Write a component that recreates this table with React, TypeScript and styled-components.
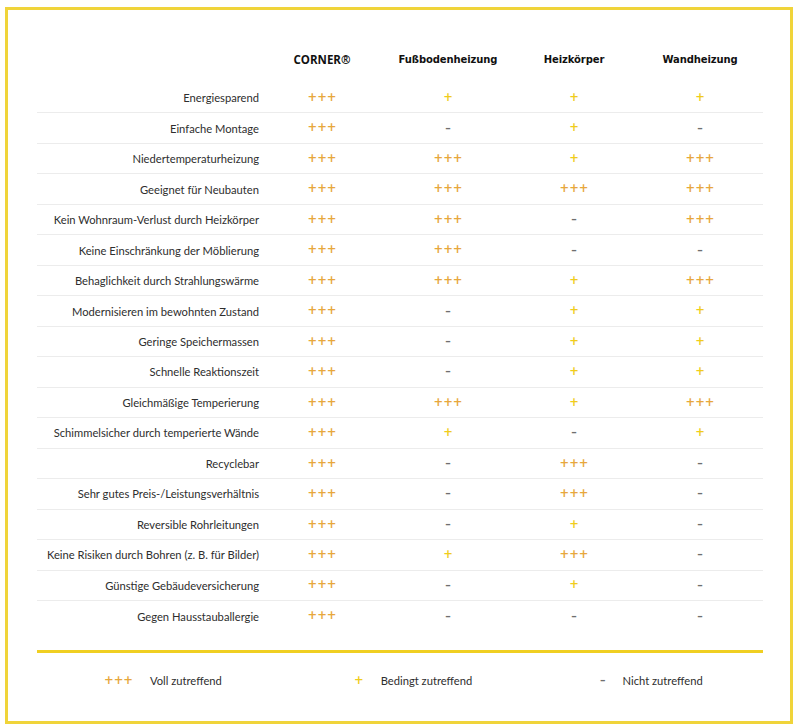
import React from 'react';
import styled, { createGlobalStyle } from 'styled-components';

type Rating = 'full' | 'partial' | 'none';

interface Row {
  label: string;
  values: Rating[];
}

const F: Rating = 'full';
const B: Rating = 'partial';
const N: Rating = 'none';

const columns = ['CORNER®', 'Fußbodenheizung', 'Heizkörper', 'Wandheizung'];

const rows: Row[] = [
  { label: 'Energiesparend', values: [F, B, B, B] },
  { label: 'Einfache Montage', values: [F, N, B, N] },
  { label: 'Niedertemperaturheizung', values: [F, F, B, F] },
  { label: 'Geeignet für Neubauten', values: [F, F, F, F] },
  { label: 'Kein Wohnraum-Verlust durch Heizkörper', values: [F, F, N, F] },
  { label: 'Keine Einschränkung der Möblierung', values: [F, F, N, N] },
  { label: 'Behaglichkeit durch Strahlungswärme', values: [F, F, B, F] },
  { label: 'Modernisieren im bewohnten Zustand', values: [F, N, B, B] },
  { label: 'Geringe Speichermassen', values: [F, N, B, B] },
  { label: 'Schnelle Reaktionszeit', values: [F, N, B, B] },
  { label: 'Gleichmäßige Temperierung', values: [F, F, B, F] },
  { label: 'Schimmelsicher durch temperierte Wände', values: [F, B, N, B] },
  { label: 'Recyclebar', values: [F, N, F, N] },
  { label: 'Sehr gutes Preis-/Leistungsverhältnis', values: [F, N, F, N] },
  { label: 'Reversible Rohrleitungen', values: [F, N, B, N] },
  { label: 'Keine Risiken durch Bohren (z. B. für Bilder)', values: [F, B, F, N] },
  { label: 'Günstige Gebäudeversicherung', values: [F, N, B, N] },
  { label: 'Gegen Hausstauballergie', values: [F, N, N, N] },
];

const GlobalStyle = createGlobalStyle`
  html, body {
    margin: 0;
    padding: 0;
    background: #ffffff;
  }
`;

const Frame = styled.div`
  box-sizing: border-box;
  margin: 7px 0 0 5px;
  width: 788px;
  height: 717px;
  border: 3px solid #f0d43a;
  padding: 39px 27px 0 29px;
  font-family: 'Lato', 'Open Sans', sans-serif;
  color: #333;
`;

const Grid = styled.div`
  display: grid;
  grid-template-columns: 222px repeat(4, 126px);
`;

const HeadRow = styled(Grid)`
  height: 20px;
  margin-bottom: 14px;
  align-items: center;
`;

const HeadCell = styled.div<{ $brand?: boolean }>`
  text-align: center;
  font-weight: bold;
  color: #111;
  font-family: ${p => (p.$brand ? "'Open Sans', sans-serif" : "'DejaVu Sans', sans-serif")};
  font-size: ${p => (p.$brand ? '11.5px' : '10px')};
  letter-spacing: ${p => (p.$brand ? '0' : '-0.1px')};
`;

const BodyRow = styled(Grid)<{ $last?: boolean }>`
  box-sizing: border-box;
  height: 30.47px;
  align-items: center;
  border-bottom: ${p => (p.$last ? 'none' : '1px solid #ececec')};
`;

const Label = styled.div`
  text-align: right;
  font-size: 11.2px;
  color: #2e2e2e;
`;

const Mark = styled.span<{ $kind: Rating }>`
  display: block;
  text-align: center;
  font-family: 'DejaVu Sans', sans-serif;
  font-weight: bold;
  font-size: ${p => (p.$kind === 'none' ? '11px' : '11.5px')};
  line-height: 1;
  color: ${p => (p.$kind === 'full' ? '#e7a73c' : p.$kind === 'partial' ? '#f0cc1c' : '#6f6f6f')};
  letter-spacing: ${p => (p.$kind === 'full' ? '0' : '0')};
`;

const symbolFor = (r: Rating) => (r === 'full' ? '+++' : r === 'partial' ? '+' : '–');

const Rule = styled.div`
  height: 3px;
  background: #f0cf22;
  margin-top: 19px;
  width: 726px;
`;

const Legend = styled.div`
  display: grid;
  grid-template-columns: 250px 246px auto;
  padding-left: 67px;
  margin-top: 21px;
  align-items: center;
`;

const LegendItem = styled.div`
  display: flex;
  align-items: center;
  gap: 17px;
  font-size: 11.2px;
  color: #2e2e2e;
`;

export default function App() {
  return (
    <>
      <GlobalStyle />
      <Frame>
        <HeadRow>
          <div />
          {columns.map((c, i) => (
            <HeadCell key={c} $brand={i === 0}>{c}</HeadCell>
          ))}
        </HeadRow>
        {rows.map((r, i) => (
          <BodyRow key={r.label} $last={i === rows.length - 1}>
            <Label>{r.label}</Label>
            {r.values.map((v, j) => (
              <Mark key={j} $kind={v}>{symbolFor(v)}</Mark>
            ))}
          </BodyRow>
        ))}
        <Rule />
        <Legend>
          <LegendItem>
            <Mark $kind="full">+++</Mark>
            Voll zutreffend
          </LegendItem>
          <LegendItem>
            <Mark $kind="partial">+</Mark>
            Bedingt zutreffend
          </LegendItem>
          <LegendItem>
            <Mark $kind="none">–</Mark>
            Nicht zutreffend
          </LegendItem>
        </Legend>
      </Frame>
    </>
  );
}
